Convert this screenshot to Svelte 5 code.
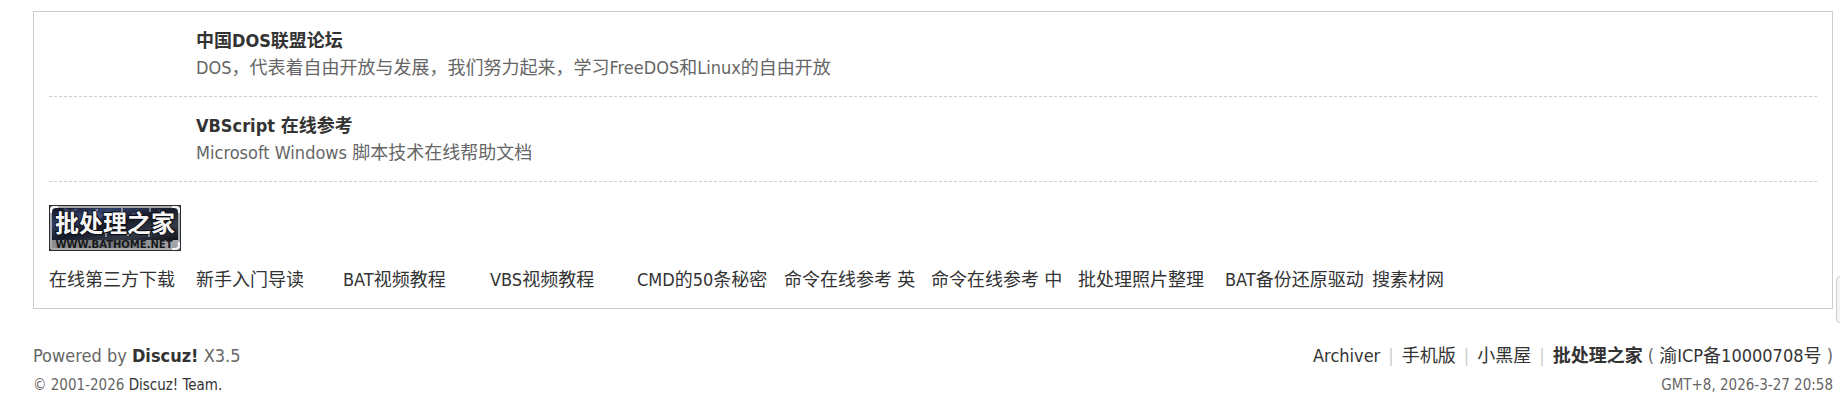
<script>
  const partners = [
    { name: '中国DOS联盟论坛', text: 'DOS，代表着自由开放与发展，我们努力起来，学习FreeDOS和Linux的自由开放' },
    { name: 'VBScript 在线参考', text: 'Microsoft Windows 脚本技术在线帮助文档' }
  ];
  const links = [
    '在线第三方下载', '新手入门导读', 'BAT视频教程', 'VBS视频教程', 'CMD的50条秘密',
    '命令在线参考 英', '命令在线参考 中', '批处理照片整理', 'BAT备份还原驱动', '搜素材网'
  ];
  const nav = ['Archiver', '手机版', '小黑屋'];
</script>

<div class="page">
  <section class="box">
    {#each partners as p}
      <div class="partner">
        <h5><a href="#partner">{p.name}</a></h5>
        <p>{p.text}</p>
      </div>
    {/each}
    <a class="logo" href="#home" aria-label="批处理之家">
      <svg width="132" height="46" viewBox="0 0 132 46">
        <defs>
          <linearGradient id="sky" x1="0" y1="0" x2="1" y2="1">
            <stop offset="0" stop-color="#10131d" />
            <stop offset=".25" stop-color="#303f68" />
            <stop offset=".5" stop-color="#171c2a" />
            <stop offset=".75" stop-color="#343a48" />
            <stop offset="1" stop-color="#111318" />
          </linearGradient>
          <linearGradient id="bar" x1="0" y1="0" x2="1" y2="0">
            <stop offset="0" stop-color="#8c8e90" />
            <stop offset=".5" stop-color="#77797c" />
            <stop offset="1" stop-color="#a2a4a6" />
          </linearGradient>
        </defs>
        <rect width="132" height="46" fill="#292b2e" />
        <rect x="1" y="1" width="130" height="44" rx="2" fill="#a9acaf" />
        <path d="M2 8V4l2-2h5M123 2h5l2 2v4M130 37v5l-3 2h-4" fill="none" stroke="#f4f5f6" stroke-width="2" />
        <path d="M3 35V8q0-5 5-5h116q5 0 5 5v27z" fill="url(#sky)" />
        <path d="M15 4l7 3 6-3M46 4l5 8 8-6M83 10l7-5M110 5l5 8" stroke="#506497" stroke-width="2" opacity=".65" fill="none" />
        <rect x="3" y="35" width="124" height="8" fill="url(#bar)" />
        <text class="logo-name" x="66" y="27" text-anchor="middle">批处理之家</text>
        <path d="M73 3v4M101 3v4M57 28v4M79 29v2M100 29v3M48 4v2" stroke="#dfe4ee" />
        <text class="logo-url" x="65" y="43" text-anchor="middle">WWW.BATHOME.NET</text>
      </svg>
    </a>
    <ul class="links">
      {#each links as l}
        <li><a href="#link">{l}</a></li>
      {/each}
    </ul>
  </section>

  <footer>
    <div>
      <p>Powered by <strong><a href="#discuz">Discuz!</a></strong> X3.5</p>
      <p class="small">© 2001-2026 <a href="#team">Discuz! Team.</a></p>
    </div>
    <div class="right">
      <p>
        {#each nav as n}<a href="#nav">{n}</a><span class="pipe">|</span>{/each}<strong><a href="#home">批处理之家</a></strong>
        ( <a href="#icp">渝ICP备10000708号</a> )
      </p>
      <p class="small">GMT+8, 2026-3-27 20:58</p>
    </div>
  </footer>
  <a class="totop" href="#top" aria-label="返回顶部"></a>
</div>

<style>
  :global(body) { background: #fff; }
  .page {
    position: relative;
    overflow: hidden;
    padding: 11px 7px 12px 33px;
    font: 18px/27px "DejaVu Sans Condensed", "Noto Sans CJK SC", sans-serif;
    color: #666;
  }
  a { color: #333; text-decoration: none; }
  p, h5, ul { margin: 0; padding: 0; }
  h5 { font-size: 18px; font-weight: 700; }
  .box { border: 1px solid #cdcdcd; padding: 0 15px 15px; }
  .partner { padding: 15px 0 15px 147px; border-bottom: 1px dashed #cdcdcd; }
  .logo { display: block; margin-top: 23px; height: 46px; }
  .logo svg { display: block; }
  .logo-name {
    font: 700 24px "Noto Sans CJK SC", sans-serif;
    fill: #f6f6f6;
    stroke: #0b0d12;
    stroke-width: 2px;
    paint-order: stroke;
  }
  .logo-url { font: 700 10px "DejaVu Sans", sans-serif; fill: #16181b; }
  .links {
    display: grid;
    grid-template-columns: repeat(auto-fill, 147px);
    margin-top: 15px;
    list-style: none;
    white-space: nowrap;
  }
  footer { display: flex; justify-content: space-between; margin-top: 33px; }
  .small { font-size: 15px; margin-top: 3px; }
  .right { text-align: right; }
  .pipe { margin: 0 8px; color: #ccc; }
  .totop {
    position: absolute;
    right: -44px;
    top: 276px;
    width: 46px;
    height: 45px;
    border: 1px solid #cdcdcd;
    border-radius: 4px;
    background: #f4f4f4;
  }
</style>
